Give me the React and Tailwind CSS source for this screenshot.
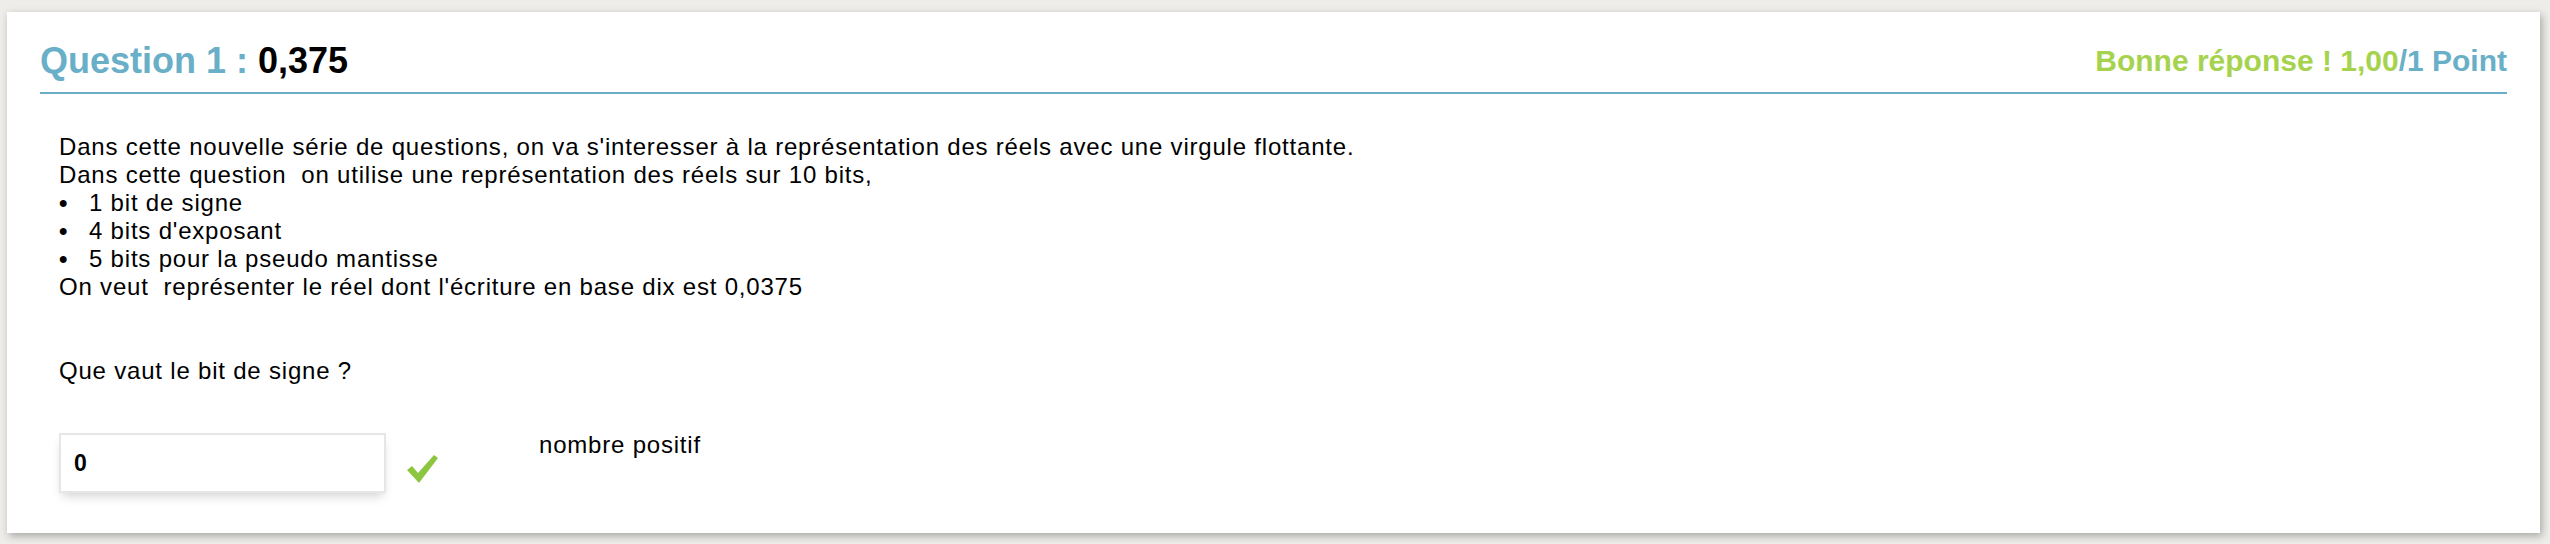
const BULLETS = ["1 bit de signe", "4 bits d'exposant", "5 bits pour la pseudo mantisse"];

function CheckMark() {
  return (
    <svg width="31" height="29" viewBox="0 0 31 29" className="blur-[0.4px]">
      <path d="M0 16 L5 12 L11 19 L27 1 L31 4 L12 29 Z" fill="#8cc640" />
    </svg>
  );
}

export default function App() {
  return (
    <div className="min-h-[544px] bg-[#eeede9] pt-[12px] pl-[7px] pr-[10px] font-['Liberation_Sans',Arial,sans-serif] text-black">
      <div className="h-[521px] bg-white shadow-[2px_3px_8px_rgba(0,0,0,0.3)]">
        {/* Header */}
        <div className="mx-[33px] pt-[29px] pb-[11px] border-b-2 border-[#6aadc6] flex items-end justify-between">
          <h1 className="text-[36px] leading-[40px] font-bold">
            <span className="text-[#6aafc8]">Question 1 : </span>
            <span>0,375</span>
          </h1>
          <div className="text-[30px] leading-[40px] font-bold">
            <span className="text-[#a6d34e]">Bonne réponse ! 1,00</span>
            <span className="text-[#6aafc8]">/1 Point</span>
          </div>
        </div>

        {/* Body */}
        <div className="pl-[52px] pt-[39px] text-[24px] leading-[28px] tracking-[0.8px]">
          <p>Dans cette nouvelle série de questions, on va s'interesser à la représentation des réels avec une virgule flottante.</p>
          <p className="whitespace-pre">Dans cette question  on utilise une représentation des réels sur 10 bits,</p>
          <ul>
            {BULLETS.map((b) => (
              <li key={b} className="flex">
                <span className="w-[30px] font-bold">•</span>
                <span>{b}</span>
              </li>
            ))}
          </ul>
          <p className="whitespace-pre">On veut  représenter le réel dont l'écriture en base dix est 0,0375</p>

          <p className="mt-[56px]">Que vaut le bit de signe ?</p>

          <div className="mt-[48px] flex items-start">
            <div className="w-[327px] h-[60px] border-2 border-[#e6e6e6] shadow-[0_6px_10px_-3px_rgba(0,0,0,0.18)] flex items-center pl-[13px] text-[23px] font-bold tracking-normal">
              0
            </div>
            <div className="ml-[21px] mt-[21px]">
              <CheckMark />
            </div>
            <span className="ml-[101px] -mt-[2px]">nombre positif</span>
          </div>
        </div>
      </div>
    </div>
  );
}
